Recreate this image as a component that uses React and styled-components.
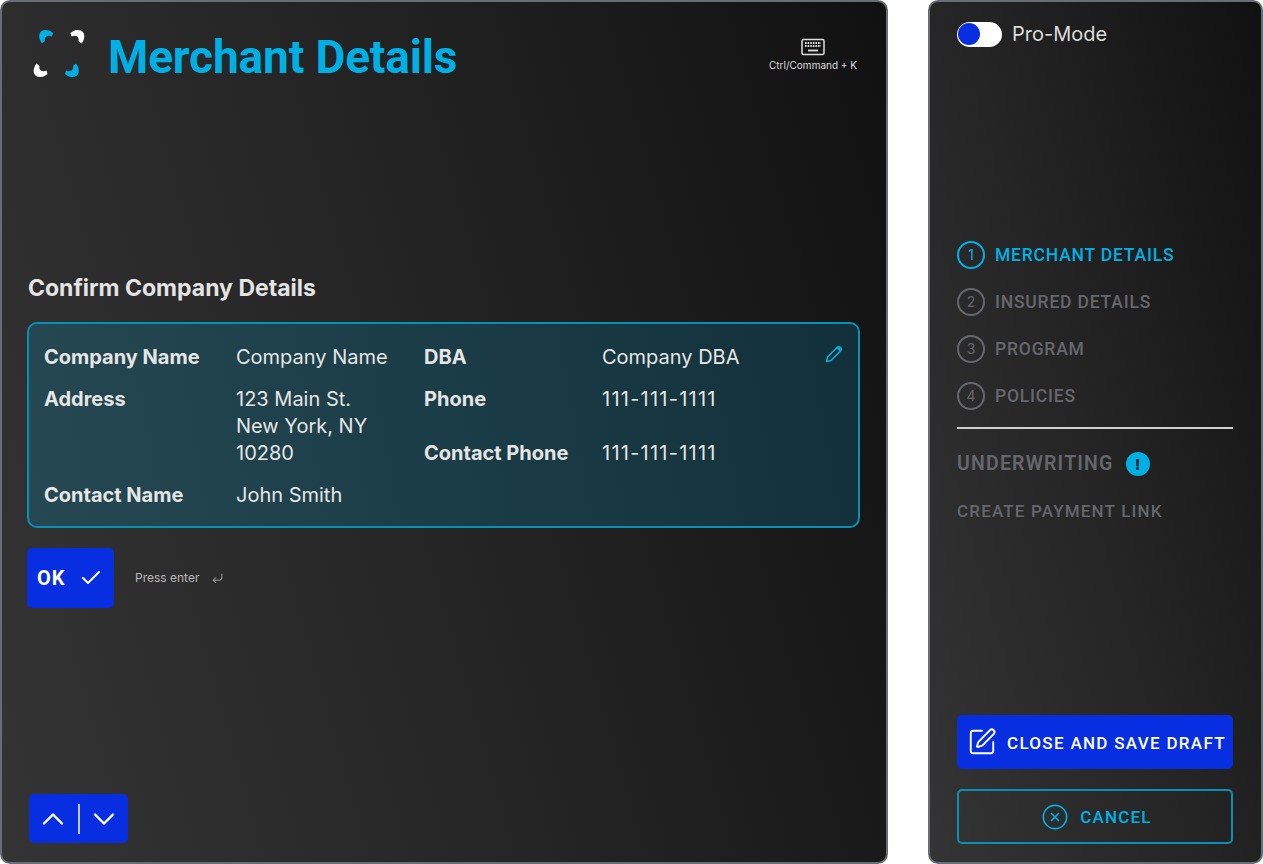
import React from "react";
import styled, { createGlobalStyle } from "styled-components";
import { Check, ChevronUp, ChevronDown, CornerDownLeft, SquarePen, CircleX } from "lucide-react";

const Global = createGlobalStyle`
  html, body { margin: 0; padding: 0; background: #fff; }
  * { box-sizing: border-box; }
  #root { width: 1263px; height: 864px; overflow: hidden; }
`;
const BLUE = "#082ee2";
const CYAN = "#00b0e4";
const HEAD = `"Roboto", "Liberation Sans", sans-serif`;
const BODY = `"Inter", "Open Sans", sans-serif`;

const Page = styled.div`
  display: grid; grid-template-columns: 888px 335px; column-gap: 40px; height: 864px;
`;
const Panel = styled.section`
  display: flex; flex-direction: column; height: 864px;
  border: 2px solid #6a6d75; border-radius: 10px;
  background: linear-gradient(74deg, #343434 0%, #242424 50%, #111111 100%);
`;
const MainPanel = styled(Panel)`padding: 0 26px 19px 26px;`;
const SidePanel = styled(Panel)`padding: 0 28px 18px 27px;`;

const Header = styled.header`
  display: flex; align-items: flex-start; height: 272px;
`;
const Logo = styled.svg`width: 55px; height: 47px; margin: 28px 0 0 2px; flex: none;`;
const Title = styled.h1`
  margin: 29px 0 0 23px; font: 700 46px/52px ${HEAD}; color: ${CYAN}; letter-spacing: -0.14px;
`;
const Shortcut = styled.div`
  margin: 36px 3px 0 auto; display: flex; flex-direction: column; align-items: center; gap: 3px;
  color: #dedede; font: 400 10px/13px ${BODY};
`;
const KeyIcon = styled.svg`width: 24px; height: 18px;`;
const Heading = styled.h2`
  margin: 0; font: 700 23px/28px ${BODY}; color: #e4e4e4;
`;
const Card = styled.div`
  position: relative; margin-top: 20px; width: 833px; height: 206px; margin-left: -1px;
  padding: 20px 15px; border: 2px solid #0c8fb4; border-radius: 10px;
  background: linear-gradient(80deg, #254852 0%, #1b3d47 50%, #12303a 100%);
  display: grid; grid-template-columns: 192px 188px 178px 1fr;
  grid-template-rows: 41.5px 27px 27px 42px 27px; align-items: start;
  color: #e6e6e6; font: 400 20px/27px ${BODY};
`;
const Label = styled.div`font-weight: 700; grid-column: ${p => p.$col}; grid-row: ${p => p.$row};`;
const Value = styled.div`grid-column: ${p => p.$col}; grid-row: ${p => p.$row};`;
const PhoneValue = styled(Value)`letter-spacing: 1.25px;`;
const EditIcon = styled.svg`position: absolute; top: 21px; right: 15px; width: 18px; height: 18px; color: ${CYAN};`;

const ActionRow = styled.div`display: flex; align-items: center; margin: 20px 0 0 -1px;`;
const OkButton = styled.button`
  width: 87px; height: 60px; border: 0; border-radius: 5px; background: ${BLUE}; color: #fff;
  display: flex; align-items: center; padding: 0 0 0 10px; gap: 13px;
  font: 700 20px/20px ${HEAD}; letter-spacing: 1px;
`;
const Hint = styled.span`
  margin-left: 21px; display: flex; align-items: center; gap: 12px; color: #b8b8b8; font: 400 12px/16px ${BODY};
`;
const NavGroup = styled.div`
  margin-top: auto; width: 99px; height: 49px; margin-left: 1px; border-radius: 5px; background: ${BLUE};
  display: flex; align-items: center; color: #fff;
`;
const NavButton = styled.span`flex: 1; display: flex; justify-content: center;`;
const NavDivider = styled.span`width: 2px; height: 30px; background: #c0cafa; flex: none;`;

const ToggleRow = styled.div`display: flex; align-items: center; gap: 10px; margin-top: 19px; color: #dcdcdc; font: 400 20px/26px ${BODY};`;
const Toggle = styled.span`
  width: 45px; height: 25px; border-radius: 13px; background: #fff; display: flex; align-items: center; padding-left: 1px;
  &::before { content: ""; width: 22px; height: 22px; border-radius: 50%; background: ${BLUE}; }
`;
const Steps = styled.ol`list-style: none; margin: 194px 0 0; padding: 0; display: flex; flex-direction: column; gap: 19px;`;
const Step = styled.li`
  display: flex; align-items: center; gap: 10px; height: 28px; color: ${p => p.$active ? CYAN : "#66676d"};
  font: 500 17.5px/28px ${HEAD}; letter-spacing: 0.8px;
`;
const StepNum = styled.span`
  width: 28px; height: 28px; border: 2px solid currentColor; border-radius: 50%; flex: none;
  display: flex; align-items: center; justify-content: center; font: 400 14px/1 ${BODY}; letter-spacing: 0;
`;
const Rule = styled.hr`margin: 17px 0 0; border: 0; height: 2px; background: #cfcfcf;`;
const Under = styled.div`
  display: flex; align-items: center; gap: 12px; margin-top: 22px; height: 26px; color: #66676d;
  font: 600 19.5px/26px ${HEAD}; letter-spacing: 1.2px;
`;
const Badge = styled.span`
  width: 24px; height: 24px; border-radius: 50%; background: ${CYAN}; color: #16222a; display: flex;
  align-items: center; justify-content: center; font: 800 15px/1 ${BODY}; letter-spacing: 0;
`;
const PayLink = styled.div`margin-top: 23px; color: #66676d; font: 500 17px/22px ${HEAD}; letter-spacing: 1.17px;`;
const PrimaryButton = styled.button`
  margin-top: auto; height: 54px; width: 276px; border: 0; border-radius: 5px; background: ${BLUE}; color: #fff;
  display: flex; align-items: center; gap: 10px; padding: 0 0 0 10px;
  font: 500 17px/22px ${HEAD}; letter-spacing: 1.3px; white-space: nowrap;
  & > span { padding-top: 2px; }
`;
const GhostButton = styled.button`
  margin-top: 20px; height: 55px; width: 276px; background: transparent; border: 2px solid #0c8fb4; border-radius: 5px; color: ${CYAN};
  display: flex; align-items: center; justify-content: center; gap: 11px; padding: 0 0 0 3px;
  font: 500 17px/22px ${HEAD}; letter-spacing: 1.2px;
`;

const steps = ["MERCHANT DETAILS", "INSURED DETAILS", "PROGRAM", "POLICIES"];
const ARC = "M42 43.500C37.500 38 38 30 46 30C49 30 51.500 31.500 53 33L52 36.500C47 34.500 44 37.500 45 41Z";

export default function App() {
  return (
    <>
      <Global />
      <Page>
        <MainPanel>
          <Header>
            <Logo viewBox="30 30 55 47">
              <path d={ARC} fill={CYAN} />
              <path d={ARC} fill="#fff" transform="translate(123.5 0) scale(-1 1)" />
              <path d={ARC} fill="#fff" transform="rotate(180 59 53.5) translate(123.5 0) scale(-1 1)" />
              <path d={ARC} fill={CYAN} transform="rotate(180 59 53.5)" />
            </Logo>
            <Title>Merchant Details</Title>
            <Shortcut>
              <KeyIcon viewBox="0 0 24 18">
                <rect x="1" y="1.500" width="22" height="15" rx="1.500" fill="none" stroke="currentColor" strokeWidth="1.500" />
                <path d="M4 5h16M4 8h16" stroke="currentColor" strokeWidth="1.800" strokeDasharray="1.600 1" fill="none" />
                <path d="M7 12.500h10" stroke="currentColor" strokeWidth="1.800" fill="none" />
              </KeyIcon>
              Ctrl/Command + K
            </Shortcut>
          </Header>
          <Heading>Confirm Company Details</Heading>
          <Card>
            <Label $col={1} $row={1}>Company Name</Label>
            <Value $col={2} $row={1}>Company Name</Value>
            <Label $col={3} $row={1}>DBA</Label>
            <Value $col={4} $row={1}>Company DBA</Value>
            <Label $col={1} $row={2}>Address</Label>
            <Value $col={2} $row="2 / span 3">123 Main St.<br />New York, NY<br />10280</Value>
            <Label $col={3} $row={2}>Phone</Label>
            <PhoneValue $col={4} $row={2}>111-111-1111</PhoneValue>
            <Label $col={3} $row={4}>Contact Phone</Label>
            <PhoneValue $col={4} $row={4}>111-111-1111</PhoneValue>
            <Label $col={1} $row={5}>Contact Name</Label>
            <Value $col={2} $row={5}>John Smith</Value>
            <EditIcon viewBox="0 0 18 18">
              <path d="M1.500 16.500L2.500 12L12 2.500Q14 1 15.500 2.500Q17 4 15.500 6L6 15.500Z" fill="none" stroke="currentColor" strokeWidth="1.600" strokeLinejoin="round" />
              <path d="M11.500 3L15 6.500L16 4.500L14 2Z" fill="currentColor" />
            </EditIcon>
          </Card>
          <ActionRow>
            <OkButton>OK <Check size={24} strokeWidth={2} /></OkButton>
            <Hint>Press enter <CornerDownLeft size={13} strokeWidth={1.6} /></Hint>
          </ActionRow>
          <NavGroup>
            <NavButton><ChevronUp size={36} strokeWidth={1.6} /></NavButton>
            <NavDivider />
            <NavButton><ChevronDown size={36} strokeWidth={1.6} /></NavButton>
          </NavGroup>
        </MainPanel>
        <SidePanel>
          <ToggleRow><Toggle />Pro-Mode</ToggleRow>
          <Steps>
            {steps.map((s, i) => (
              <Step key={s} $active={i === 0}><StepNum>{i + 1}</StepNum>{s}</Step>
            ))}
          </Steps>
          <Rule />
          <Under>UNDERWRITING <Badge>!</Badge></Under>
          <PayLink>CREATE PAYMENT LINK</PayLink>
          <PrimaryButton><SquarePen size={30} strokeWidth={1.5} /><span>CLOSE AND SAVE DRAFT</span></PrimaryButton>
          <GhostButton><CircleX size={28} strokeWidth={1.4} />CANCEL</GhostButton>
        </SidePanel>
      </Page>
    </>
  );
}
